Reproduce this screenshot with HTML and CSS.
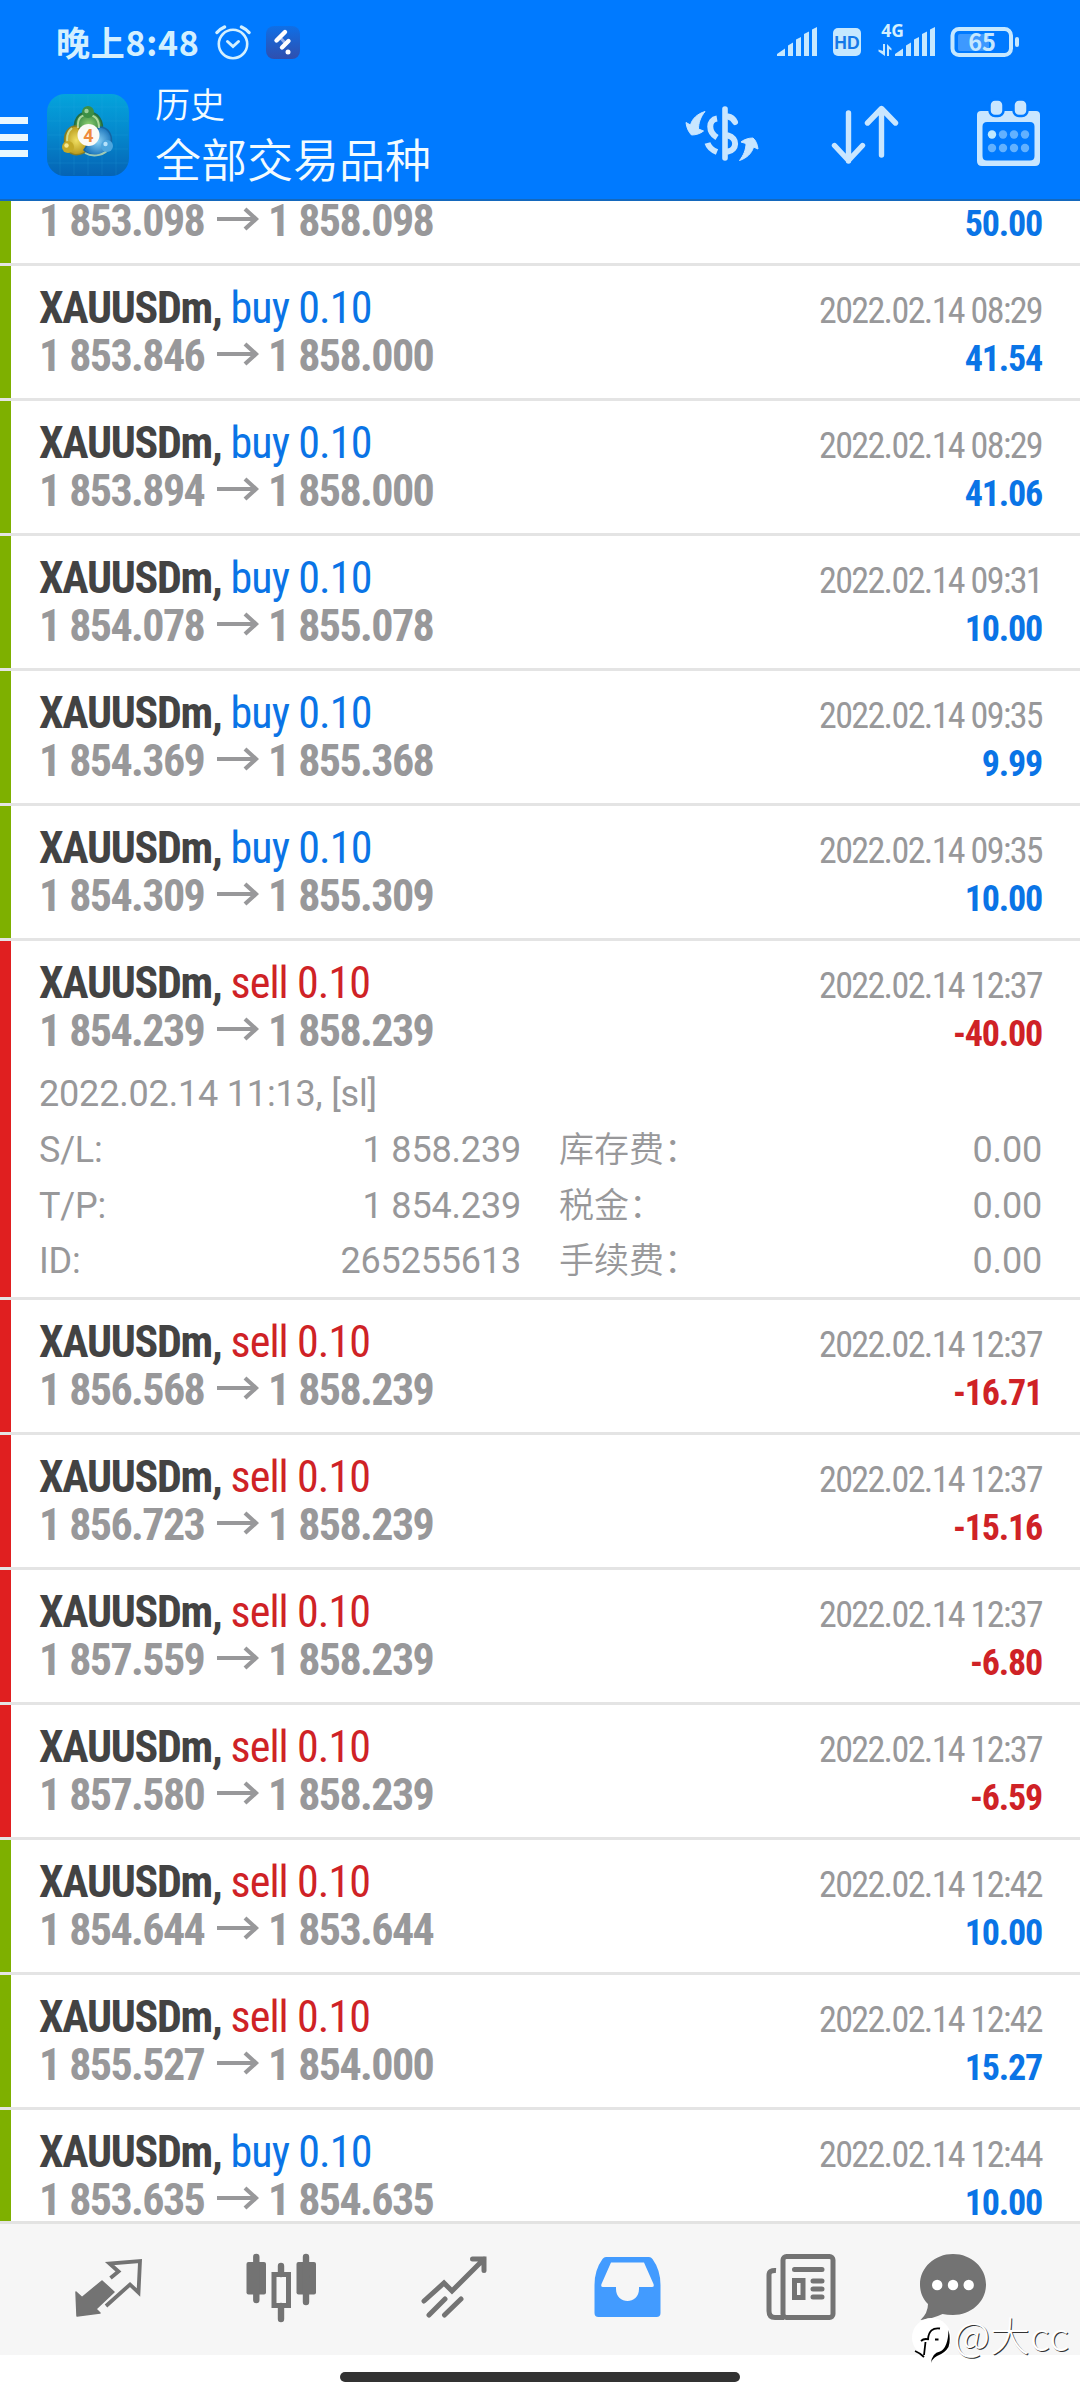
FILE: index.html
```html
<!DOCTYPE html>
<html lang="zh-CN">
<head>
<meta charset="utf-8">
<title>历史</title>
<link rel="stylesheet" href="styles.css">
</head>
<body>
<svg class="defs" aria-hidden="true">
  <symbol id="arrow" viewBox="0 0 42 24"><path d="M0 12H38M28 2L39 12L28 22" fill="none" stroke="currentColor" stroke-width="4.2"/></symbol>
</svg>
<div class="screen">
  <header class="header">
    <div class="status">
      <span class="clock">晚上8:48</span>
      <svg class="alarm" viewBox="215 24 36 36" width="36" height="36"><g fill="none" stroke="#d3f0ff" stroke-width="2.6" stroke-linecap="round"><circle cx="233" cy="44" r="14.2"/><path d="M227.5 41.5L233 46.5L238.500 41.5" stroke-width="3"/><path d="M217 32.500Q220 29 224.500 27M249 32.500Q246 29 241.500 27" stroke-width="3.4"/></g></svg>
      <svg class="mini" viewBox="266 26 34 34" width="34" height="34"><defs><linearGradient id="mg" x2="0" y2="1"><stop offset="0" stop-color="#0f6fe6"/><stop offset="1" stop-color="#2f4fae"/></linearGradient></defs><rect x="266" y="26" width="34" height="33" rx="8" fill="url(#mg)"/><g stroke="#fff" stroke-width="4.400" stroke-linecap="round"><path d="M281.500 39L286 44" stroke="#8da9e6" stroke-width="3"/><path d="M276.500 40.500L285 32M282 47.500L288.500 41"/></g><circle cx="288" cy="52" r="2.500" fill="#fff"/></svg>
      <svg class="sys" viewBox="776 18 246 44" width="246" height="44">
        <g fill="#c6e8ff">
          <path id="sig" d="M777 56V54L785 48.500V56ZM788 56V45.500L793 42.500V56ZM796 56V39.500L801 37V56ZM804 56V34L809 31.500V56ZM812 56V29.500L817 27V56Z"/>
          <rect x="833" y="28" width="28" height="28" rx="5"/>
          <use href="#sig" x="118"/>
          <path d="M883 44H885V56L878.500 51.500V49.500L883 51ZM887 56H889V49L891.500 50.500V48.500L887 44Z"/>
          <rect x="1015" y="37" width="4" height="10" rx="2"/>
        </g>
        <rect x="958" y="34" width="31" height="17" rx="2" fill="#3d99ff"/>
        <rect x="952.500" y="29" width="58.500" height="26" rx="6.500" fill="none" stroke="#c6e8ff" stroke-width="4"/>
        <text x="847" y="48.500" class="hd">HD</text>
        <text x="892.500" y="37" class="net">4G</text>
        <text x="982" y="51" class="bat">65</text>
      </svg>
    </div>
    <div class="appbar">
      <div class="burger"><i></i><i></i><i></i></div>
      <svg class="logo" viewBox="47 94 82 82" width="82" height="82">
        <defs>
          <linearGradient id="bg" x2="0" y2="1"><stop offset="0" stop-color="#04a4dc"/><stop offset=".5" stop-color="#0587cc"/><stop offset="1" stop-color="#0563b4"/></linearGradient>
          <radialGradient id="gg"><stop offset="0" stop-color="#8dce72"/><stop offset="1" stop-color="#2d7f3c"/></radialGradient>
          <radialGradient id="gy"><stop offset="0" stop-color="#f0df62"/><stop offset="1" stop-color="#b7981b"/></radialGradient>
          <radialGradient id="gb"><stop offset="0" stop-color="#8ad2f7"/><stop offset="1" stop-color="#2079be"/></radialGradient>
        </defs>
        <rect x="47" y="94" width="82" height="82" rx="18" fill="url(#bg)"/>
        <path d="M60 95V175M74 95V175M88 95V175M102 95V175M116 95V175M48 107H128M48 121H128M48 135H128M48 149H128M48 163H128" stroke="#35b7e8" stroke-opacity=".16"/>
        <path d="M75 135C72 119 79 112 88 112S105 119 102 136Z" fill="url(#gg)" stroke="#246c43" stroke-width="1.500"/>
        <path d="M78 126C68 125 63 134 65 145C69 157 79 157 88 150Z" fill="url(#gy)" stroke="#867e24" stroke-width="1.500"/>
        <path d="M99 127C109 127 113 136 111 145C107 157 91 158 84 150Z" fill="url(#gb)" stroke="#1665a2" stroke-width="1.500"/>
        <path d="M78 128C77 118 81 115 88 115S99 119 99 128M72 128C67 132 66 139 68 144M85 153C92 157 101 156 107 151" fill="none" stroke="#d9f4bd" stroke-opacity=".7" stroke-width="2"/>
        <circle cx="88" cy="112" r="6" fill="#3c8f45"/><circle cx="68" cy="147" r="6" fill="#c4a927"/><circle cx="107" cy="146" r="6" fill="#4ca6de"/>
        <circle cx="86.500" cy="111" r="2.200" fill="#9bcf9a"/><circle cx="66.500" cy="145.500" r="2.200" fill="#f4e892"/><circle cx="105.500" cy="144" r="2.200" fill="#b5e2fb"/>
        <circle cx="88.500" cy="135" r="11" fill="#fbfaf6"/>
        <text x="88.300" y="141.500" class="four">4</text>
      </svg>
      <div class="titles"><div class="t1">历史</div><div class="t2">全部交易品种</div></div>
      <svg class="tools" viewBox="684 98 360 72" width="360" height="72">
        <g fill="none" stroke="#c9e6ff" stroke-linecap="round" stroke-linejoin="round">
          <path d="M725 109V158" stroke-width="5.600"/>
          <path d="M717 118.500C708 120 708 132 717 137.500M707.500 143C709 148 712 150 717 152" stroke-width="6" stroke-linecap="butt"/>
          <path d="M728 116.500C731 117 733.500 119 735 122M728 135.500C738 138 737 150 728 151.500" stroke-width="6"/>
        </g>
        <path d="M705 111.500C697 114 692 119 690.500 125L686 122.500C686.500 128 689 132.500 691.500 135C696 135 700.500 133.500 703.500 131L698.500 129C698.500 123 700.500 117 705 111.500ZM739.500 160.500C747 158 752 153 753.500 147L758 149C757.500 144 755.500 140 753 138C748.500 138 744 139.500 741 142L746 143.500C746 149.500 743.500 155.500 739.500 160.500Z" fill="#c9e6ff" stroke="#c9e6ff" stroke-linejoin="round"/>
        <path d="M848.500 113V161M834.500 145.500L848.500 160.500L862.500 145.500M881.500 155V109M867.500 123L881.500 108.500L895.500 123" fill="none" stroke="#c9e6ff" stroke-width="5.400" stroke-linecap="round" stroke-linejoin="round"/>
        <path fill-rule="evenodd" d="M981 111H1036Q1040 111 1040 115V161Q1040 166 1035 166H982Q977 166 977 161V115Q977 111 981 111ZM987 122Q982.500 122 982.500 126.500V156Q982.500 160.500 987 160.500H1030Q1034.500 160.500 1034.500 156V126.500Q1034.500 122 1030 122Z" fill="#c9e6ff"/>
        <g fill="#c9e6ff" stroke="#007aff" stroke-width="2.500"><rect x="989.500" y="99.500" width="14" height="16.500" rx="5.500"/><rect x="1013.500" y="99.500" width="14" height="16.500" rx="5.500"/></g>
        <g fill="#62b1ff"><circle cx="992" cy="134.500" r="4.200" fill="#bfe9ff"/><circle cx="1003" cy="134.500" r="4.200"/><circle cx="1014" cy="134.500" r="4.200"/><circle cx="1025" cy="134.500" r="4.200"/><circle cx="992" cy="148" r="4.200"/><circle cx="1003" cy="148" r="4.200"/><circle cx="1014" cy="148" r="4.200"/><circle cx="1025" cy="148" r="4.200"/></g>
      </svg>
    </div>
  </header>

  <main class="list">
    <article class="deal win first">
      <div class="line price"><span>1 853.098</span><svg><use href="#arrow"/></svg><span>1 858.098</span><b class="buy">50.00</b></div>
    </article>
    <article class="deal win">
      <div class="line"><span class="sym">XAUUSDm,</span><span class="side buy">buy 0.10</span><time>2022.02.14 08:29</time></div>
      <div class="line price"><span>1 853.846</span><svg><use href="#arrow"/></svg><span>1 858.000</span><b class="buy">41.54</b></div>
    </article>
    <article class="deal win">
      <div class="line"><span class="sym">XAUUSDm,</span><span class="side buy">buy 0.10</span><time>2022.02.14 08:29</time></div>
      <div class="line price"><span>1 853.894</span><svg><use href="#arrow"/></svg><span>1 858.000</span><b class="buy">41.06</b></div>
    </article>
    <article class="deal win">
      <div class="line"><span class="sym">XAUUSDm,</span><span class="side buy">buy 0.10</span><time>2022.02.14 09:31</time></div>
      <div class="line price"><span>1 854.078</span><svg><use href="#arrow"/></svg><span>1 855.078</span><b class="buy">10.00</b></div>
    </article>
    <article class="deal win">
      <div class="line"><span class="sym">XAUUSDm,</span><span class="side buy">buy 0.10</span><time>2022.02.14 09:35</time></div>
      <div class="line price"><span>1 854.369</span><svg><use href="#arrow"/></svg><span>1 855.368</span><b class="buy">9.99</b></div>
    </article>
    <article class="deal win">
      <div class="line"><span class="sym">XAUUSDm,</span><span class="side buy">buy 0.10</span><time>2022.02.14 09:35</time></div>
      <div class="line price"><span>1 854.309</span><svg><use href="#arrow"/></svg><span>1 855.309</span><b class="buy">10.00</b></div>
    </article>
    <article class="deal loss open">
      <div class="line"><span class="sym">XAUUSDm,</span><span class="side sell">sell 0.10</span><time>2022.02.14 12:37</time></div>
      <div class="line price"><span>1 854.239</span><svg><use href="#arrow"/></svg><span>1 858.239</span><b class="sell">-40.00</b></div>
      <div class="details">
        <div class="comment">2022.02.14 11:13, [sl]</div>
        <span>S/L:</span><span class="num">1 858.239</span><span class="cn">库存费：</span><span class="num">0.00</span>
        <span>T/P:</span><span class="num">1 854.239</span><span class="cn">税金：</span><span class="num">0.00</span>
        <span>ID:</span><span class="num">265255613</span><span class="cn">手续费：</span><span class="num">0.00</span>
      </div>
    </article>
    <article class="deal loss">
      <div class="line"><span class="sym">XAUUSDm,</span><span class="side sell">sell 0.10</span><time>2022.02.14 12:37</time></div>
      <div class="line price"><span>1 856.568</span><svg><use href="#arrow"/></svg><span>1 858.239</span><b class="sell">-16.71</b></div>
    </article>
    <article class="deal loss">
      <div class="line"><span class="sym">XAUUSDm,</span><span class="side sell">sell 0.10</span><time>2022.02.14 12:37</time></div>
      <div class="line price"><span>1 856.723</span><svg><use href="#arrow"/></svg><span>1 858.239</span><b class="sell">-15.16</b></div>
    </article>
    <article class="deal loss">
      <div class="line"><span class="sym">XAUUSDm,</span><span class="side sell">sell 0.10</span><time>2022.02.14 12:37</time></div>
      <div class="line price"><span>1 857.559</span><svg><use href="#arrow"/></svg><span>1 858.239</span><b class="sell">-6.80</b></div>
    </article>
    <article class="deal loss">
      <div class="line"><span class="sym">XAUUSDm,</span><span class="side sell">sell 0.10</span><time>2022.02.14 12:37</time></div>
      <div class="line price"><span>1 857.580</span><svg><use href="#arrow"/></svg><span>1 858.239</span><b class="sell">-6.59</b></div>
    </article>
    <article class="deal win">
      <div class="line"><span class="sym">XAUUSDm,</span><span class="side sell">sell 0.10</span><time>2022.02.14 12:42</time></div>
      <div class="line price"><span>1 854.644</span><svg><use href="#arrow"/></svg><span>1 853.644</span><b class="buy">10.00</b></div>
    </article>
    <article class="deal win">
      <div class="line"><span class="sym">XAUUSDm,</span><span class="side sell">sell 0.10</span><time>2022.02.14 12:42</time></div>
      <div class="line price"><span>1 855.527</span><svg><use href="#arrow"/></svg><span>1 854.000</span><b class="buy">15.27</b></div>
    </article>
    <article class="deal win">
      <div class="line"><span class="sym">XAUUSDm,</span><span class="side buy">buy 0.10</span><time>2022.02.14 12:44</time></div>
      <div class="line price"><span>1 853.635</span><svg><use href="#arrow"/></svg><span>1 854.635</span><b class="buy">10.00</b></div>
    </article>
  </main>

  <nav class="tabs">
    <svg viewBox="68 2248 80 80"><path d="M76 2292L82 2297.500L102 2281L114 2292L96 2309L100 2313L77 2316Z" fill="#737373" stroke="#737373" stroke-width="1.500" stroke-linejoin="round"/><path d="M110.500 2278L118.500 2271.500L109.500 2263.500L140 2261L138.500 2292.500L130 2284.500L106 2306" fill="none" stroke="#737373" stroke-width="3.800"/></svg>
    <svg viewBox="241 2248 80 80"><g fill="#737373"><rect x="246.500" y="2262" width="19.500" height="32.500" rx="2"/><rect x="296.500" y="2262" width="19.500" height="32.500" rx="2"/></g><path d="M256.300 2257V2300M306 2257V2302M281 2266V2274M281 2306V2319" stroke="#737373" stroke-width="6.400" stroke-linecap="round"/><rect x="274" y="2274.500" width="14.500" height="31" fill="none" stroke="#737373" stroke-width="5"/></svg>
    <svg viewBox="414 2248 80 80"><path d="M424 2301L444 2283L452 2291L484 2259M472.500 2259H484V2270.500M429 2315L445 2299M444.500 2315L461 2299" fill="none" stroke="#737373" stroke-width="5" stroke-linecap="round" stroke-linejoin="miter"/></svg>
    <svg viewBox="587 2248 80 80"><path fill-rule="evenodd" fill="#429bff" d="M606 2257H649Q651 2257 652.500 2259Q660.500 2270 660.500 2285V2313Q660.500 2317 656.500 2317H598.500Q594.500 2317 594.500 2313V2285Q594.500 2270 602.500 2259Q604 2257 606 2257ZM611 2262.500L601.500 2284Q600.500 2287 603 2287H616V2289C616 2305 639 2305 639 2289V2287H652Q654.500 2287 653.500 2284L644 2262.500Z"/></svg>
    <svg viewBox="760 2248 80 80"><g fill="none" stroke="#737373" stroke-width="5"><rect x="783" y="2256.500" width="50" height="61" rx="3.500"/><path d="M776 2270.500Q769 2270 769 2275V2311Q769 2317.500 775 2317.500H784"/><path d="M794.500 2269.500H822M813 2281H822M813 2289H822M813 2297H822" stroke-linecap="round"/><rect x="794.500" y="2280.500" width="8.500" height="17"/></g></svg>
    <svg viewBox="913 2248 80 80"><path d="M953 2254C971.500 2254 986 2267.500 986 2284.500S971.500 2315 953 2315Q947 2315 942.500 2314Q932 2319 920.500 2320Q928 2313 928 2304C922 2298 920 2291 920 2284.500C920 2267.500 934.500 2254 953 2254Z" fill="#737373"/><g fill="#fff"><circle cx="937.200" cy="2285" r="5.200"/><circle cx="953" cy="2285" r="5.200"/><circle cx="968.700" cy="2285" r="5.200"/></g></svg>
  </nav>
  <div class="gesture"><i></i></div>
  <div class="mark">
    <svg viewBox="911 2317 42 48" width="42" height="48"><circle cx="931.500" cy="2337.500" r="19.500" fill="#fff"/><path d="M926 2357Q930 2364 932 2362Q947 2357 950 2345L940 2340Z" fill="#fff"/><path d="M940 2328.500Q929 2327 928 2339M921 2341Q924 2338 929 2339.500M935 2339.500H938.500M915 2351Q920 2353 924 2357M925.500 2342L924 2355" fill="none" stroke="#000" stroke-width="1.800"/><path d="M948.500 2330Q951 2340 948.500 2347Q945 2353 937 2356Q932 2359 931 2363Q932 2353 940 2351.500Q948 2348 948.500 2330Z" fill="#000"/></svg>
    <span>@大cc</span>
  </div>
</div>
</body>
</html>
```
FILE: styles.css
```css
* { box-sizing: border-box; }
body { margin: 0; background: #fff; font-family: Roboto, "Noto Sans CJK SC", sans-serif; }
.defs { position: absolute; width: 0; height: 0; }
svg { display: block; flex: none; }
.screen { position: relative; width: 1080px; height: 2400px; overflow: hidden; display: flex; flex-direction: column; }

.header { height: 201px; background: #007aff; border-bottom: 2px solid #1468bd; }
.status { display: flex; align-items: flex-start; height: 84px; padding: 18px 58px 0 56px; }
.clock { width: 159px; font: 700 34px/48px "Noto Sans CJK SC", sans-serif; letter-spacing: .7px; color: #d3f0ff; white-space: nowrap; }
.alarm { margin-top: 6px; }
.mini { margin: 8px 0 0 15px; }
.sys { margin-left: auto; }
.sys text { font-family: "Noto Sans CJK SC", sans-serif; text-anchor: middle; }
.sys .hd { font: 700 17.500px "Liberation Sans", sans-serif; fill: #1478e8; }
.sys .net { font: 700 17.500px "Open Sans", sans-serif; fill: #d3f0ff; }
.sys .bat { font-size: 23.500px; font-weight: 700; fill: #c6e8ff; }
.appbar { display: flex; height: 115px; }
.burger { width: 28px; margin: 33px 19px 0 0; display: flex; flex-direction: column; gap: 9.500px; }
.burger i { height: 7px; background: #e9f8ff; }
.logo { margin-top: 10px; }
.titles { margin-left: 26px; color: #f2fbff; font-family: "Noto Sans CJK SC", sans-serif; font-weight: 350; white-space: nowrap; }
.t1 { font-size: 35px; line-height: 52px; margin-top: -7px; }
.t2 { font-size: 46px; line-height: 68px; margin-top: -6px; }
.tools { margin: 14px 36px 0 auto; }
.four { font: 700 18px Roboto, sans-serif; fill: #ef8a3c; text-anchor: middle; }

/* each deal has a result stripe on the left and a divider along the bottom */
.list { height: 2020px; overflow: hidden; }
.deal { height: 135px; padding: 18px 38px 0 39px; background-position: bottom, left; background-size: 100% 3px, 11px 100%; background-repeat: no-repeat; }
.win { background-image: linear-gradient(#e4e4e4, #e4e4e4), linear-gradient(#7eb000, #7eb000); }
.loss { background-image: linear-gradient(#e4e4e4, #e4e4e4), linear-gradient(#e01f20, #e01f20); }
.first { display: flow-root; height: 65px; padding-top: 0; }
.first .line { margin-top: -4px; }
.open { height: 359px; }
.line { display: flex; align-items: baseline; height: 48px; font: 400 44px/48px "Roboto Condensed", Roboto, sans-serif; white-space: nowrap; }
.sym { width: 191.500px; font-weight: 700; letter-spacing: -1.300px; color: #434343; }
.side { letter-spacing: -.900px; }
.line time { margin-left: auto; font-size: 36px; letter-spacing: -1.620px; color: #98989a; }
.price { color: #98989a; font-weight: 700; letter-spacing: -1.600px; word-spacing: 1px; }
.price span { width: 162px; }
.price svg { width: 42px; height: 24px; align-self: flex-start; margin: 10px 9px 0 16px; }
.price b { margin-left: auto; font-size: 36px; font-weight: 700; letter-spacing: -1.200px; }
.buy { color: #0a74e6; }
.sell { color: #cf2226; }
.details { margin-top: 11.500px; display: grid; grid-template-columns: 100px 382px 1fr 200px; grid-auto-rows: 55.500px; font-size: 36px; line-height: 55.500px; letter-spacing: -.180px; color: #98989a; align-items: baseline; }
.comment { grid-column: 1 / -1; }
.num { text-align: right; }
.cn { padding-left: 38px; font: 350 35px/49.500px "Noto Sans CJK SC", sans-serif; letter-spacing: 0; }

.tabs { height: 134px; flex: none; display: flex; background: #f6f6f6; border-top: 3px solid #e3e3e2; padding: 24px 0 0 68px; gap: 93px; }
.tabs svg { width: 80px; height: 80px; }
.tabs svg:last-child { margin-left: -20px; }
.gesture { height: 45px; padding-top: 17px; display: flex; justify-content: center; }
.gesture i { width: 400px; height: 10px; border-radius: 5px; background: #323232; }
.mark { position: absolute; left: 911px; top: 2317px; display: flex; }
.mark span { margin: -9px 0 0 1px; font: 300 39.500px/52px "Noto Sans CJK SC", sans-serif; letter-spacing: .300px; color: #fff; text-shadow: 1px 1px 0 #333; }
```
